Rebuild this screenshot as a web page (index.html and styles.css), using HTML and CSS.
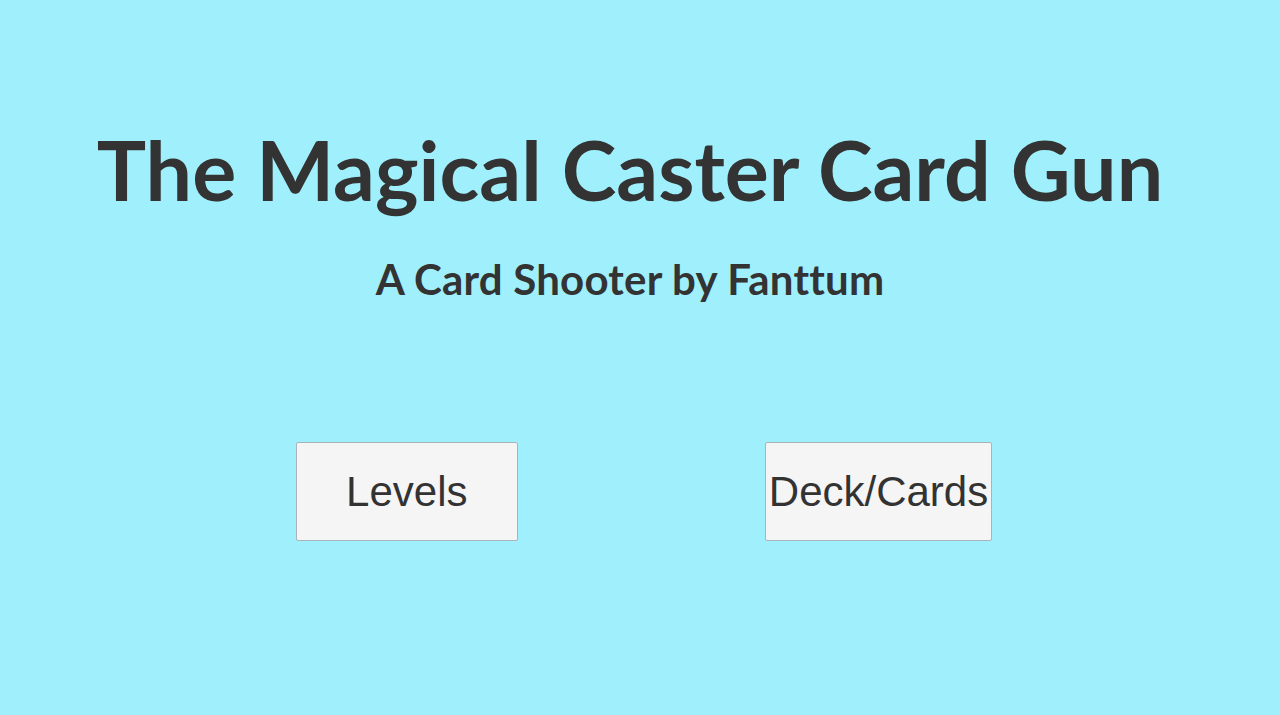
FILE: index.html
```html
<!DOCTYPE html>
<html>
<head>
<meta charset="utf-8">
<link rel="stylesheet" href="styles.css">
</head>
<body>
<main class="page">
  <h1 class="title">The Magical Caster Card Gun</h1>
  <h2 class="subtitle">A Card Shooter by Fanttum</h2>
  <div class="menu">
    <button class="btn">Levels</button>
    <button class="btn">Deck/Cards</button>
  </div>
</main>
</body>
</html>
```
FILE: styles.css
```css
html, body {
  margin: 0;
  padding: 0;
  height: 100%;
}
body {
  background: #9ff0fc;
  color: #333333;
  font-family: "Lato", sans-serif;
}
.page {
  display: flex;
  flex-direction: column;
  align-items: center;
  padding-top: 112px;
}
.title {
  margin: 0 20px 0 0;
  font-size: 82.5px;
  font-weight: 700;
  line-height: 116px;
  letter-spacing: 0;
}
.subtitle {
  margin: 23px 20px 0 0;
  font-size: 42px;
  font-weight: 700;
  line-height: 56px;
  letter-spacing: 0.2px;
}
.menu {
  display: flex;
  gap: 247px;
  margin-top: 135px;
  padding-left: 8px;
}
.btn {
  min-width: 222px;
  height: 99px;
  padding: 0 3px;
  background: #f5f5f5;
  border: 1px solid #a9b4b8;
  border-radius: 2px;
  color: #333333;
  font-family: "Liberation Sans", Arial, sans-serif;
  font-size: 42px;
}
```
